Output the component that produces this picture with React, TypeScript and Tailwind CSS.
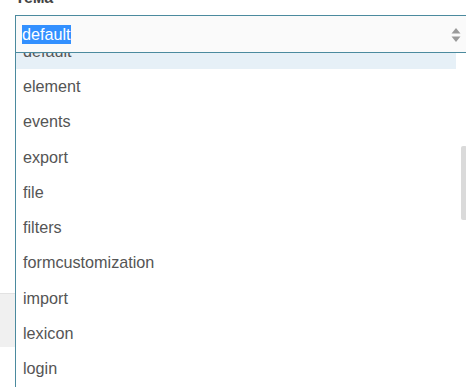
import { useState } from "react";

const topics = [
  "default",
  "element",
  "events",
  "export",
  "file",
  "filters",
  "formcustomization",
  "import",
  "lexicon",
  "login",
  "mail",
];

export default function App() {
  const [selected] = useState("default");

  return (
    <div className="relative w-[466px] h-[387px] overflow-hidden bg-white font-['Liberation_Sans',Arial,sans-serif]">
      <div className="pl-[15px]">
        {/* LABEL */}
        <div className="mt-[-12px] h-[27px] text-[16px] leading-[20px] font-bold text-[#444]">
          Тема
        </div>

        {/* SELECT */}
        <div className="w-[460px] h-[38px] border border-[#4b8a9e] bg-[#fafafa] flex items-center justify-between pl-[6px] pr-[13px]">
          <span className="bg-[#3390ff] text-white text-[16.2px] leading-[19px] mt-[1px]">
            {selected}
          </span>
          <svg width="10" height="16" viewBox="0 0 10 16" className="mt-[1px]">
            <path d="M5 1 L9.5 6.5 L0.5 6.5 Z" fill="#9a9a9a" />
            <path d="M5 15 L9.5 9.5 L0.5 9.5 Z" fill="#9a9a9a" />
          </svg>
        </div>
      </div>

      {/* PAGE BEHIND */}
      <div className="mt-[240px] h-[54px] bg-[#f0f0f0] border-t border-[#e2e2e2]" />

      {/* DROPDOWN LIST */}
      <div className="absolute left-[15px] top-[53px] w-[451px] bottom-0 flex border-l-[1.5px] border-[#4b8a9e] bg-white overflow-hidden">
        <div className="w-[440px] mt-[-19.5px]">
          {topics.map((t) => (
            <div
              key={t}
              className={`h-[35.25px] flex items-center pl-[7px] text-[16.2px] text-[#555] ${
                t === selected ? "bg-[#e6f0f7]" : ""
              }`}
            >
              {t}
            </div>
          ))}
        </div>
        <div className="flex-1 relative">
          <div className="absolute left-[5px] top-[93px] w-[6px] h-[74px] rounded-[2px] bg-[#dadada]" />
        </div>
      </div>
    </div>
  );
}
